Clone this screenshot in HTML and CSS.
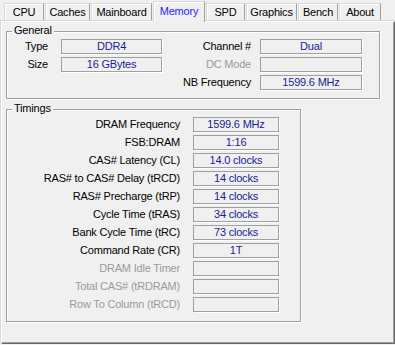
FILE: index.html
```html
<!DOCTYPE html>
<html>
<head>
<meta charset="utf-8">
<link rel="stylesheet" href="styles.css">
</head>
<body>
<div class="window">
  <div class="tabs">
    <div class="tab w-cpu">CPU</div>
    <div class="tab w-caches">Caches</div>
    <div class="tab w-main">Mainboard</div>
    <div class="tab tab-active w-mem">Memory</div>
    <div class="tab w-spd">SPD</div>
    <div class="tab w-gfx">Graphics</div>
    <div class="tab w-bench">Bench</div>
    <div class="tab w-about">About</div>
  </div>
  <div class="panel">
    <div class="group general">
      <span class="group-title">General</span>
      <div class="general-grid">
        <div class="lbl lbl-a">Type</div>
        <div class="field">DDR4</div>
        <div class="lbl lbl-b">Channel #</div>
        <div class="field">Dual</div>
        <div class="lbl lbl-a">Size</div>
        <div class="field">16 GBytes</div>
        <div class="lbl lbl-b dis">DC Mode</div>
        <div class="field"></div>
        <div class="lbl lbl-a"></div>
        <div class="empty"></div>
        <div class="lbl lbl-b">NB Frequency</div>
        <div class="field">1599.6 MHz</div>
      </div>
    </div>
    <div class="group timings">
      <span class="group-title">Timings</span>
      <div class="timings-grid">
        <div class="lbl lbl-t">DRAM Frequency</div><div class="field">1599.6 MHz</div>
        <div class="lbl lbl-t">FSB:DRAM</div><div class="field">1:16</div>
        <div class="lbl lbl-t">CAS# Latency (CL)</div><div class="field">14.0 clocks</div>
        <div class="lbl lbl-t">RAS# to CAS# Delay (tRCD)</div><div class="field">14 clocks</div>
        <div class="lbl lbl-t">RAS# Precharge (tRP)</div><div class="field">14 clocks</div>
        <div class="lbl lbl-t">Cycle Time (tRAS)</div><div class="field">34 clocks</div>
        <div class="lbl lbl-t">Bank Cycle Time (tRC)</div><div class="field">73 clocks</div>
        <div class="lbl lbl-t">Command Rate (CR)</div><div class="field">1T</div>
        <div class="lbl lbl-t dis">DRAM Idle Timer</div><div class="field"></div>
        <div class="lbl lbl-t dis">Total CAS# (tRDRAM)</div><div class="field"></div>
        <div class="lbl lbl-t dis">Row To Column (tRCD)</div><div class="field"></div>
      </div>
    </div>
  </div>
</div>
</body>
</html>
```
FILE: styles.css
```css
html, body {
  margin: 0;
  padding: 0;
  background: #f0f0f0;
}
body {
  width: 395px;
  height: 345px;
  overflow: hidden;
  font-family: "Liberation Sans", Arial, sans-serif;
  font-size: 11px;
  letter-spacing: -0.2px;
  color: #000;
}
.window {
  display: flex;
  flex-direction: column;
}
.tabs {
  display: flex;
  align-items: flex-end;
  height: 21px;
  padding-left: 4px;
}
.tab {
  box-sizing: border-box;
  height: 18px;
  border: 1px solid #d9d9d9;
  border-bottom: none;
  border-right: 1px solid #a0a0a0;
  box-shadow: inset 1px 1px 0 #fff;
  background: #f0f0f0;
  text-align: center;
  line-height: 17px;
  margin-right: 1px;
}
.tab-active {
  position: relative;
  z-index: 1;
  height: 21px;
  margin-bottom: -1px;
  color: #1f1fff;
  line-height: 18px;
  border-color: #d9d9d9;
  border-right-color: #a0a0a0;
}
.w-cpu { width: 40px; }
.w-caches { width: 45px; }
.w-main { width: 61px; }
.w-mem { width: 52px; }
.w-spd { width: 39px; }
.w-gfx { width: 51px; }
.w-bench { width: 40px; }
.w-about { width: 42px; }

.panel {
  box-sizing: border-box;
  margin-left: 1px;
  width: 394px;
  height: 323px;
  border-top: 1px solid #fff;
  border-left: 1px solid #fff;
  border-right: 1px solid #696969;
  border-bottom: 1px solid #696969;
  box-shadow: inset -1px -1px 0 #a0a0a0, -1px -1px 0 #d9d9d9;
  padding: 9px 0 0 4px;
  display: flex;
  flex-direction: column;
  align-items: flex-start;
}
.group {
  position: relative;
  box-sizing: border-box;
  border: 1px solid #a0a0a0;
  box-shadow: inset 1px 1px 0 #fff, 1px 1px 0 #fff;
}
.general {
  width: 374px;
  height: 68px;
  padding-top: 7px;
}
.timings {
  margin-top: 10px;
  width: 295px;
  height: 213px;
  padding-top: 7px;
}
.group-title {
  position: absolute;
  left: 5px;
  top: -8px;
  padding: 0 2px;
  line-height: 13px;
  background: #f0f0f0;
}
.general-grid {
  display: grid;
  grid-template-columns: 54px 101px 98px 102px;
  grid-auto-rows: 15px;
  row-gap: 3px;
}
.timings-grid {
  display: grid;
  grid-template-columns: 186px 86px;
  grid-auto-rows: 15px;
  row-gap: 3px;
}
.lbl {
  text-align: right;
  line-height: 15px;
  white-space: nowrap;
}
.lbl-a { padding-right: 13px; }
.lbl-b { padding-right: 9px; }
.lbl-t { padding-right: 13px; }
.dis { color: #9b9b9b; }
.field {
  box-sizing: border-box;
  height: 15px;
  border: 1px solid #a0a0a0;
  box-shadow: 1px 1px 0 #fff;
  color: #1b1b96;
  text-align: center;
  line-height: 13px;
  white-space: nowrap;
}
```
